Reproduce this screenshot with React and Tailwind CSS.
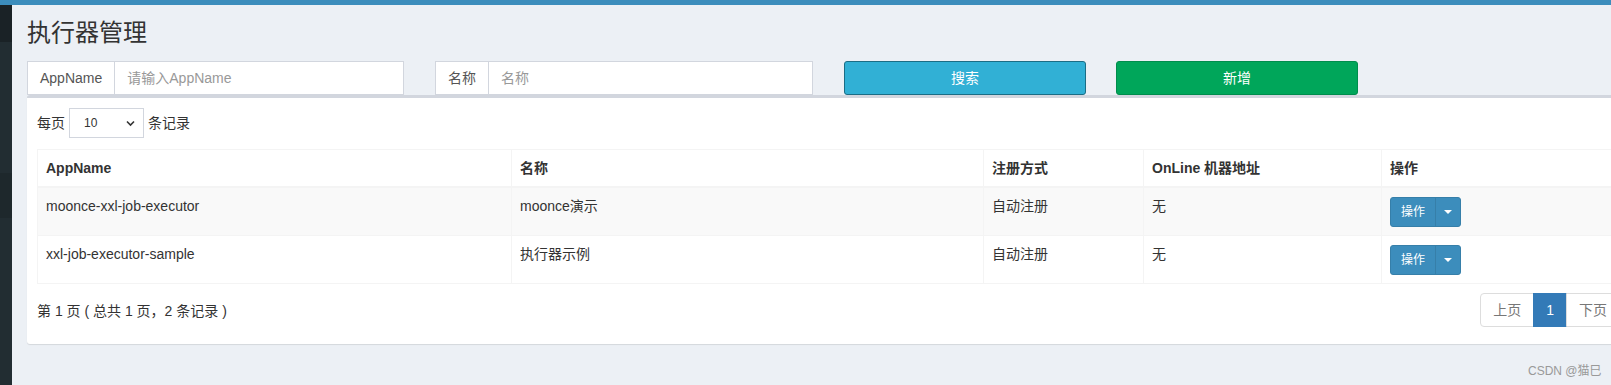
export default function App() {
  const rows = [
    { app: "moonce-xxl-job-executor", name: "moonce演示", type: "自动注册", addr: "无" },
    { app: "xxl-job-executor-sample", name: "执行器示例", type: "自动注册", addr: "无" },
  ];

  return (
    <div
      className="relative w-[1611px] h-[385px] overflow-hidden bg-[#ecf0f5] text-[14px] text-[#333]"
      style={{ fontFamily: '"Liberation Sans", Arial, "Noto Sans CJK SC", sans-serif' }}
    >
      {/* top bar */}
      <div className="h-[5px] bg-[#3c8dbc]" />

      <div className="flex">
        {/* sidebar */}
        <div className="w-[12px] shrink-0 h-[380px] flex flex-col bg-[#222d32]">
          <div className="h-[37px] bg-[#1a2226]" />
          <div className="h-[131px]" />
          <div className="h-[45px] bg-[#1e282c]" />
        </div>

        {/* content */}
        <div className="w-[1635px] shrink-0 px-[15px] pt-[15px]">
          <h1 className="text-[24px] leading-[26px] m-0 font-normal">执行器管理</h1>

          {/* filters */}
          <div className="flex mt-[15px] h-[34px]">
            <div className="flex w-[377px]">
              <span className="px-[12px] h-[34px] leading-[32px] border border-[#d2d6de] bg-white text-[#555] whitespace-nowrap">
                AppName
              </span>
              <input
                className="flex-1 h-[34px] px-[12px] border border-l-0 border-[#d2d6de] bg-white outline-none placeholder:text-[#999]"
                placeholder="请输入AppName"
              />
            </div>
            <div className="flex w-[378px] ml-[31px]">
              <span className="px-[12px] h-[34px] leading-[32px] border border-[#d2d6de] bg-white text-[#555] whitespace-nowrap">
                名称
              </span>
              <input
                className="flex-1 h-[34px] px-[12px] border border-l-0 border-[#d2d6de] bg-white outline-none placeholder:text-[#999]"
                placeholder="名称"
              />
            </div>
            <button className="w-[242px] ml-[31px] h-[34px] rounded-[3px] bg-[#31b0d5] border border-[#1b6d85] text-white">
              搜索
            </button>
            <button className="w-[242px] ml-[30px] h-[34px] rounded-[3px] bg-[#00a65a] border border-[#008d4c] text-white">
              新增
            </button>
          </div>

          {/* box */}
          <div className="bg-white border-t-[3px] border-[#d2d6de] rounded-[3px] shadow-[0_1px_1px_rgba(0,0,0,0.1)] px-[10px] pt-[10px] pb-[17px]">
            <div className="flex items-center h-[30px]">
              <span>每页</span>
              <div className="relative ml-[4px] w-[75px] h-[30px] border border-[#d2d6de] flex items-center pl-[14px] text-[12px]">
                10
                <svg className="absolute right-[8px] top-[11px]" width="9" height="7" viewBox="0 0 9 7">
                  <path d="M1 1.5 L4.5 5 L8 1.5" fill="none" stroke="#333" strokeWidth="1.6" />
                </svg>
              </div>
              <span className="ml-[4px]">条记录</span>
            </div>

            <table className="mt-[11px] border-collapse w-[1585px] table-fixed">
              <colgroup>
                <col className="w-[474px]" />
                <col className="w-[472px]" />
                <col className="w-[160px]" />
                <col className="w-[238px]" />
                <col />
              </colgroup>
              <thead>
                <tr className="text-left">
                  {["AppName", "名称", "注册方式", "OnLine 机器地址", "操作"].map((h) => (
                    <th
                      key={h}
                      className="border border-[#f4f4f4] border-b-2 p-[8px] leading-[20px] font-bold"
                    >
                      {h}
                    </th>
                  ))}
                </tr>
              </thead>
              <tbody>
                {rows.map((r, i) => (
                  <tr key={r.app} className={i === 0 ? "bg-[#f9f9f9]" : "bg-white"}>
                    <td className="border border-[#f4f4f4] p-[8px] leading-[20px] align-top">{r.app}</td>
                    <td className="border border-[#f4f4f4] p-[8px] leading-[20px] align-top">{r.name}</td>
                    <td className="border border-[#f4f4f4] p-[8px] leading-[20px] align-top">{r.type}</td>
                    <td className="border border-[#f4f4f4] p-[8px] leading-[20px] align-top">{r.addr}</td>
                    <td className="border border-[#f4f4f4] p-[8px] leading-[20px] align-top">
                      <div className="flex mt-[1px] h-[30px] w-[71px] rounded-[3px] bg-[#3c8dbc] border border-[#367fa9] text-white text-[12px]">
                        <span className="w-[45px] flex items-center justify-center border-r border-[#367fa9]">
                          操作
                        </span>
                        <span className="flex-1 flex items-center justify-center">
                          <svg width="8" height="5" viewBox="0 0 8 5">
                            <path d="M0 0 H8 L4 4 Z" fill="#fff" />
                          </svg>
                        </span>
                      </div>
                    </td>
                  </tr>
                ))}
              </tbody>
            </table>

            {/* footer */}
            <div className="flex justify-between mt-[9px]">
              <div className="pt-[8px] leading-[20px]">第 1 页 ( 总共 1 页，2 条记录 )</div>
              <div className="flex h-[34px] leading-[20px] mr-[2px]">
                <span className="px-[12px] py-[6px] border border-[#ddd] rounded-l-[4px] text-[#777]">上页</span>
                <span className="px-[12px] py-[6px] border border-[#337ab7] bg-[#337ab7] text-white -ml-px">1</span>
                <span className="px-[12px] py-[6px] border border-[#ddd] rounded-r-[4px] text-[#777] -ml-px">下页</span>
              </div>
            </div>
          </div>
        </div>
      </div>

      {/* watermark */}
      <div className="absolute left-[1528px] top-[362px] text-[12px] text-[#999]">CSDN @猫巳</div>
    </div>
  );
}
